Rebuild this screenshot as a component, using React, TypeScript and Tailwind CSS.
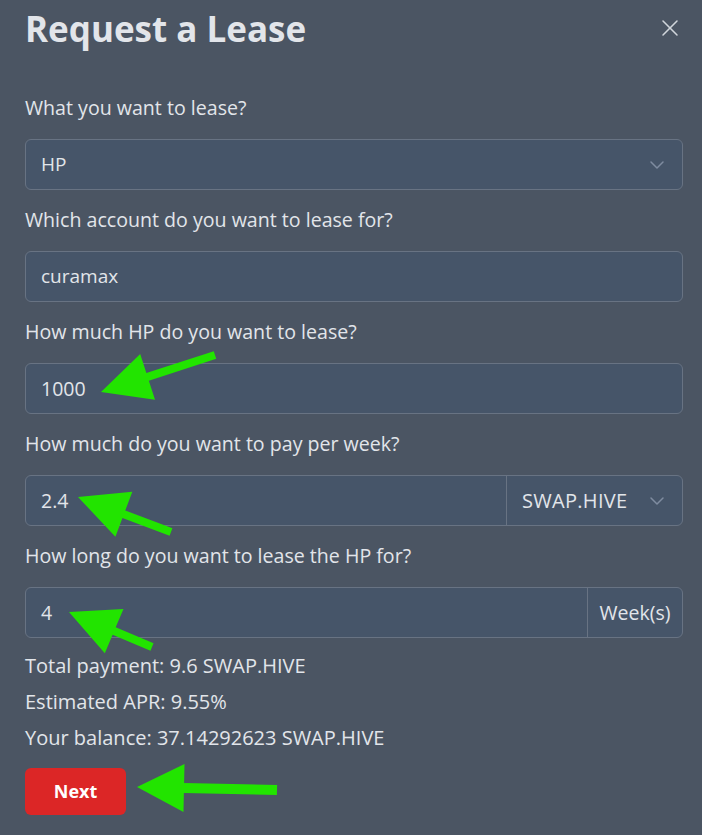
import React from 'react';
import { X, ChevronDown } from 'lucide-react';

type Pt = [number, number];

// green annotation arrow: tail -> tip
function arrowPoints(tail: Pt, tip: Pt, headLen: number, headHalf: number, shaftHalf: number) {
  const dx = tail[0] - tip[0];
  const dy = tail[1] - tip[1];
  const len = Math.hypot(dx, dy);
  const ux = dx / len;
  const uy = dy / len;
  const nx = -uy;
  const ny = ux;
  const bx = tip[0] + ux * headLen;
  const by = tip[1] + uy * headLen;
  const pts: Pt[] = [
    tip,
    [bx + nx * headHalf, by + ny * headHalf],
    [bx + nx * shaftHalf, by + ny * shaftHalf],
    [tail[0] + nx * shaftHalf, tail[1] + ny * shaftHalf],
    [tail[0] - nx * shaftHalf, tail[1] - ny * shaftHalf],
    [bx - nx * shaftHalf, by - ny * shaftHalf],
    [bx - nx * headHalf, by - ny * headHalf],
  ];
  return pts.map((p) => p.join(',')).join(' ');
}

const arrows = [
  { tail: [215, 355] as Pt, tip: [101, 392] as Pt, head: 49, half: 24, shaft: 4 },
  { tail: [171, 532] as Pt, tip: [78, 497] as Pt, head: 49, half: 24, shaft: 4 },
  { tail: [152, 647] as Pt, tip: [69, 612] as Pt, head: 49, half: 24, shaft: 4 },
  { tail: [277, 790] as Pt, tip: [137, 787] as Pt, head: 47, half: 24, shaft: 5 },
];

function Label({ children }: { children: React.ReactNode }) {
  return <div className="h-6 leading-6 text-[19.6px] text-[#e2e5ea] mb-[19px] whitespace-nowrap">{children}</div>;
}

export default function App() {
  return (
    <div
      className="relative w-[702px] h-[835px] bg-[#4b5563] pl-[25px] pr-[19px] overflow-hidden"
      style={{ fontFamily: '"Open Sans", Lato, sans-serif' }}
    >
      {/* Header */}
      <div className="flex items-start justify-between pt-[7px] mb-[45px]">
        <h1 className="text-[35px] leading-[44px] font-bold text-[#e2e5ea]">Request a Lease</h1>
        <button className="mt-[7px] mr-[-1px] text-[#d1d5db]">
          <X className="w-[28px] h-[28px]" strokeWidth={1.3} />
        </button>
      </div>

      <Label>What you want to lease?</Label>
      <div className="h-[51px] mb-[18px] flex items-center justify-between rounded-md border border-[#687383] bg-[#465569] pl-[15px] pr-[13px]">
        <span className="text-[19px] text-[#e2e5ea]">HP</span>
        <ChevronDown className="w-6 h-6 text-[#7f8ca0]" strokeWidth={1.5} />
      </div>

      <Label>Which account do you want to lease for?</Label>
      <div className="h-[51px] mb-[18px] flex items-center rounded-md border border-[#687383] bg-[#465569] pl-[15px]">
        <span className="text-[19px] text-[#e2e5ea]">curamax</span>
      </div>

      <Label>How much HP do you want to lease?</Label>
      <div className="h-[51px] mb-[18px] flex items-center rounded-md border border-[#687383] bg-[#465569] pl-[15px]">
        <span className="text-[19.5px] text-[#e2e5ea]">1000</span>
      </div>

      <Label>How much do you want to pay per week?</Label>
      <div className="h-[51px] mb-[18px] flex rounded-md border border-[#687383] bg-[#465569]">
        <div className="flex-1 flex items-center pl-[15px] border-r border-[#687383]">
          <span className="text-[19.5px] text-[#e2e5ea]">2.4</span>
        </div>
        <div className="w-[175px] flex items-center justify-between pl-[15px] pr-[13px]">
          <span className="text-[20px] text-[#e2e5ea] tracking-[0.3px]">SWAP.HIVE</span>
          <ChevronDown className="w-6 h-6 text-[#7f8ca0]" strokeWidth={1.5} />
        </div>
      </div>

      <Label>How long do you want to lease the HP for?</Label>
      <div className="h-[51px] mb-[10px] flex rounded-md border border-[#687383] bg-[#465569]">
        <div className="flex-1 flex items-center pl-[15px] border-r border-[#687383]">
          <span className="text-[19.5px] text-[#e2e5ea]">4</span>
        </div>
        <div className="w-[94px] flex items-center justify-center">
          <span className="text-[19.5px] text-[#e2e5ea]">Week(s)</span>
        </div>
      </div>

      <div className="text-[20px] leading-[36px] text-[#e2e5ea]">
        <div>Total payment: 9.6 SWAP.HIVE</div>
        <div>Estimated APR: 9.55%</div>
        <div>Your balance: 37.14292623 SWAP.HIVE</div>
      </div>

      <button className="mt-[12px] w-[101px] h-[47px] rounded-md bg-[#dc2626] text-white text-[18px] font-bold">
        Next
      </button>

      {/* annotation arrows */}
      <svg className="absolute inset-0 pointer-events-none" width="702" height="835">
        {arrows.map((a, i) => (
          <polygon key={i} points={arrowPoints(a.tail, a.tip, a.head, a.half, a.shaft)} fill="#22e400" />
        ))}
      </svg>
    </div>
  );
}
